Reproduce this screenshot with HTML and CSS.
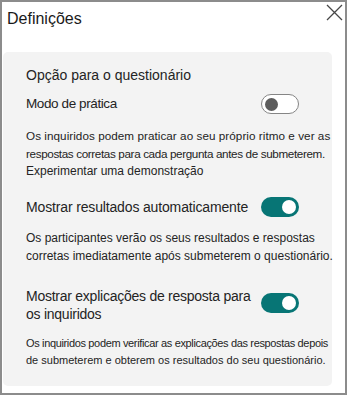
FILE: index.html
```html
<!DOCTYPE html>
<html lang="pt">
<head>
<meta charset="utf-8">
<link rel="stylesheet" href="styles.css">
</head>
<body>
<div class="dialog">
  <div class="header">
    <h1 class="title">Definições</h1>
    <button class="close" aria-label="Fechar">
      <svg width="17" height="17" viewBox="0 0 17 17"><path d="M1 1 L16 16 M16 1 L1 16" stroke="#474747" stroke-width="1.3" fill="none"/></svg>
    </button>
  </div>
  <div class="panel">
    <div class="section-title">Opção para o questionário</div>
    <div class="row row-practice">
      <span class="label label-practice">Modo de prática</span>
      <span class="toggle off"><span class="knob"></span></span>
    </div>
    <p class="desc desc-practice"><span class="line first">Os inquiridos podem praticar ao seu próprio ritmo e ver as</span><span class="line second">respostas corretas para cada pergunta antes de submeterem.</span></p>
    <p class="desc desc-demo">Experimentar uma demonstração</p>
    <div class="row row-results">
      <span class="label label-results">Mostrar resultados automaticamente</span>
      <span class="toggle on"><span class="knob"></span></span>
    </div>
    <p class="desc desc-results"><span class="line">Os participantes verão os seus resultados e respostas</span><span class="line">corretas imediatamente após submeterem o questionário.</span></p>
    <div class="row row-explain">
      <span class="label label-explain"><span class="line">Mostrar explicações de resposta para</span><span class="line">os inquiridos</span></span>
      <span class="toggle on"><span class="knob"></span></span>
    </div>
    <p class="desc desc-explain"><span class="line tight">Os inquiridos podem verificar as explicações das respostas depois</span><span class="line">de submeterem e obterem os resultados do seu questionário.</span></p>
  </div>
</div>
</body>
</html>
```

FILE: styles.css
```css
html, body {
  margin: 0;
  padding: 0;
  background: #ffffff;
}
body {
  font-family: "Liberation Sans", Arial, sans-serif;
  color: #242424;
}
.dialog {
  width: 347px;
  height: 395px;
  box-sizing: border-box;
  border: 2px solid #8c8c8c;
  display: flex;
  flex-direction: column;
}
.header {
  height: 50px;
  flex-shrink: 0;
  display: flex;
  justify-content: space-between;
  align-items: flex-start;
}
.title {
  margin: 6px 0 0 5px;
  font-size: 16px;
  font-weight: normal;
  line-height: 22px;
  color: #1a1a1a;
}
.close {
  border: none;
  background: none;
  padding: 0;
  margin: 2px 2px 0 0;
  width: 17px;
  height: 17px;
  display: flex;
}
.panel {
  margin-left: 1px;
  width: 329px;
  height: 334px;
  box-sizing: border-box;
  background: #f3f3f3;
  border-radius: 5px;
  padding: 13px 0 0 23px;
}
.line {
  display: block;
  white-space: nowrap;
}
.section-title {
  font-size: 14px;
  line-height: 20px;
}
.row {
  width: 273px;
  display: flex;
  justify-content: space-between;
  align-items: center;
  font-size: 14px;
  line-height: 20px;
}
.row-practice {
  margin-top: 9px;
}
.label-practice {
  font-size: 13.5px;
  letter-spacing: -0.4px;
}
.row-results {
  margin-top: 17px;
}
.label-results {
  letter-spacing: -0.15px;
  white-space: nowrap;
}
.row-explain {
  margin-top: 22px;
  align-items: flex-start;
  line-height: 18px;
}
.label-explain {
  letter-spacing: -0.25px;
}
.row-explain .toggle {
  margin-top: 6px;
}
.desc {
  margin: 0;
  font-size: 12px;
  line-height: 18px;
}
.desc-practice {
  margin-top: 13px;
  font-size: 11.7px;
}
.desc-practice .first {
  letter-spacing: 0.05px;
}
.desc-practice .second {
  letter-spacing: -0.37px;
}
.desc-demo {
  margin-top: -1px;
}
.desc-results {
  margin-top: 12px;
}
.desc-explain {
  margin-top: 12px;
  font-size: 11px;
  line-height: 17px;
}
.desc-explain .tight {
  letter-spacing: -0.35px;
}
.toggle {
  width: 38px;
  height: 20px;
  box-sizing: border-box;
  border-radius: 10px;
  display: flex;
  align-items: center;
  flex-shrink: 0;
}
.toggle.off {
  border: 1px solid #858585;
  background: #ffffff;
  justify-content: flex-start;
  padding-left: 3px;
}
.toggle.off .knob {
  width: 13px;
  height: 13px;
  border-radius: 50%;
  background: #5c5c5c;
}
.toggle.on {
  background: #077575;
  justify-content: flex-end;
  padding-right: 3px;
}
.toggle.on .knob {
  width: 14px;
  height: 14px;
  border-radius: 50%;
  background: #ffffff;
}
```
